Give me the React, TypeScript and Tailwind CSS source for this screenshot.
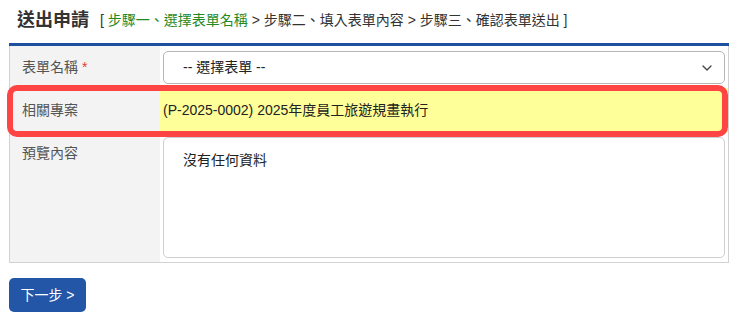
import { ChevronDown } from "lucide-react";

const FONT = {
  fontFamily: '"Liberation Sans", Arial, "Noto Sans CJK TC", sans-serif',
};

export default function App() {
  return (
    <div className="min-h-[324px] w-full bg-white text-[#333]" style={FONT}>
      <div className="ml-[9px] w-[720px]">
        {/* header */}
        <div className="flex h-[43px] items-center gap-[11px] pl-[8px] pb-[3px]">
          <h1 className="text-[18px] font-semibold leading-none text-[#333]">送出申請</h1>
          <div className="text-[14px] leading-none text-[#333]">
            [ <span className="text-[#1f8a1f]">步驟一、選擇表單名稱</span> &gt; 步驟二、填入表單內容 &gt;
            步驟三、確認表單送出 ]
          </div>
        </div>
        <div className="h-[3px] bg-[#1f4f9f]" />

        {/* form table */}
        <div className="border-x border-b border-[#d2d2d2] text-[14px]">
          <div className="grid h-[42px] grid-cols-[150px_1fr]">
            <div className="flex items-center bg-[#f3f3f3] pl-3 text-[#555]">
              表單名稱 <span className="ml-1 text-[#e53935]">*</span>
            </div>
            <div className="flex items-center px-[3px] pt-[1px]">
              <div className="flex h-[33px] w-full items-center justify-between rounded-[5px] border border-[#b5b5b5] bg-white pl-[19px] pr-[9px] text-[#222]">
                <span>-- 選擇表單 --</span>
                <ChevronDown size={16} strokeWidth={2} className="text-[#444]" />
              </div>
            </div>
          </div>

          <div className="relative grid h-[45px] grid-cols-[150px_1fr]">
            <div className="flex items-center bg-[#f3f3f3] pl-3 text-[#555]">相關專案</div>
            <div className="flex items-center bg-[#ffff99] px-[3px] text-[#222]">
              (P-2025-0002) 2025年度員工旅遊規畫執行
            </div>
            <div className="pointer-events-none absolute -top-[3px] -bottom-[4px] -left-[3px] right-0 rounded-[10px] border-[6px] border-[#ff4444]" />
          </div>

          <div className="grid h-[129px] grid-cols-[150px_1fr]">
            <div className="bg-[#f3f3f3] pl-3 pt-[10px] leading-5 text-[#555]">預覽內容</div>
            <div className="px-[3px] py-[4px]">
              <div className="h-full w-full rounded-[5px] border border-[#cfcfcf] bg-white pl-[19px] pt-[12px] leading-5 text-[#222]">
                沒有任何資料
              </div>
            </div>
          </div>
        </div>

        <button className="mt-[15px] flex h-[34px] w-[77px] items-center justify-center rounded-[5px] bg-[#2356a6] text-[14px] text-white">
          下一步 &gt;
        </button>
      </div>
    </div>
  );
}
